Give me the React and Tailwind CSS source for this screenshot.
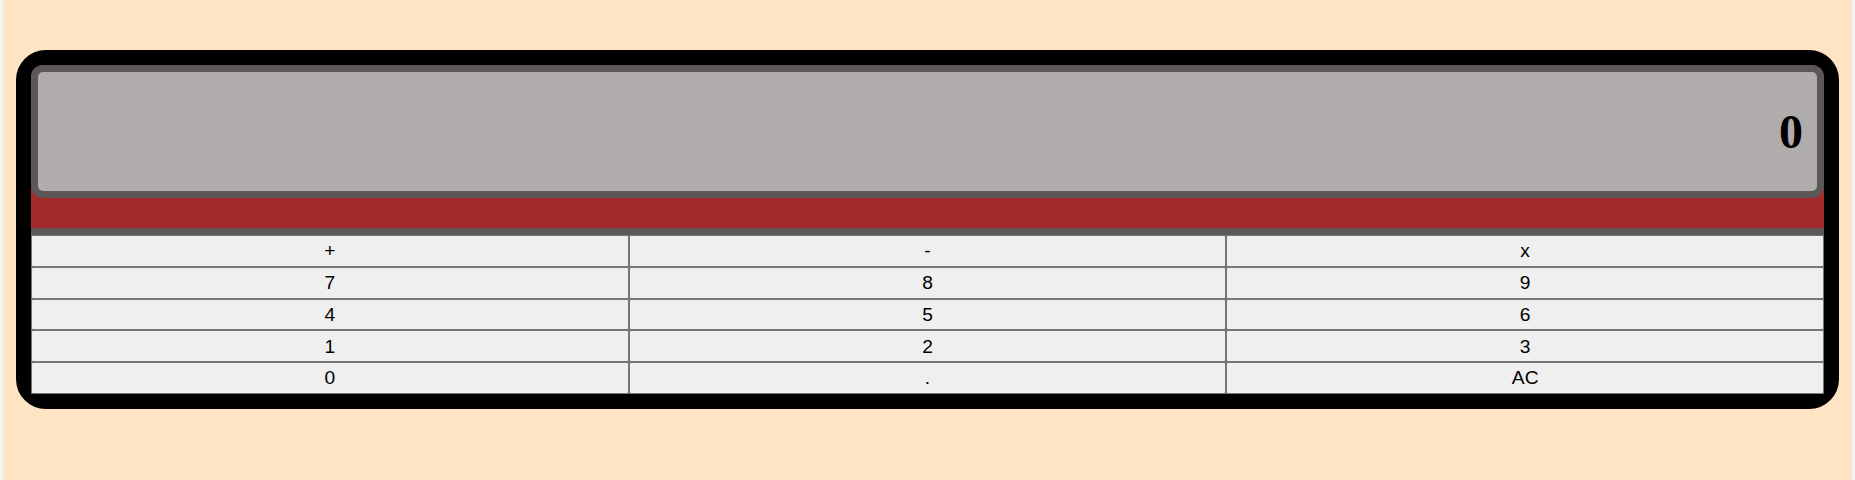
import React, { useState } from 'react';

const KEYS = ['+', '-', 'x', '7', '8', '9', '4', '5', '6', '1', '2', '3', '0', '.', 'AC'];

const Calculator = () => {
  const [display, setDisplay] = useState('0');

  const press = (key) => {
    if (key === 'AC') return setDisplay('0');
    setDisplay((prev) => (prev === '0' && key !== '.' ? key : prev + key));
  };

  return (
    <div className="border-[15px] border-black bg-black rounded-[30px]">
      {/* Display */}
      <div className="bg-[#a52a2a] rounded-t-[12px]">
        <div className="h-[133px] flex items-center justify-end pr-[14px] bg-[#b0acab] border-[7px] border-[#5c5858] rounded-[12px]">
          <span className="text-[48px] font-bold leading-none text-black [font-family:'Liberation_Serif',serif]">
            {display}
          </span>
        </div>
        <div className="h-[30px]" />
      </div>
      <div className="h-[7px] bg-[#5c5858]" />

      {/* Keys */}
      <div className="grid grid-cols-3 grid-rows-5 h-[159px] gap-[2px] p-px bg-[#767676]">
        {KEYS.map((key) => (
          <button
            key={key}
            onClick={() => press(key)}
            className="bg-[#efefef] rounded-[1px] text-[19.2px] leading-none text-black [font-family:'Liberation_Sans',Arial,sans-serif]"
          >
            {key}
          </button>
        ))}
      </div>
    </div>
  );
};

export default function App() {
  return (
    <div className="bg-[#f3f3f3] px-[3px]">
      <div className="bg-[#ffe4c4] min-h-[480px] pt-[50px] px-[13px]">
        <Calculator />
      </div>
    </div>
  );
}
